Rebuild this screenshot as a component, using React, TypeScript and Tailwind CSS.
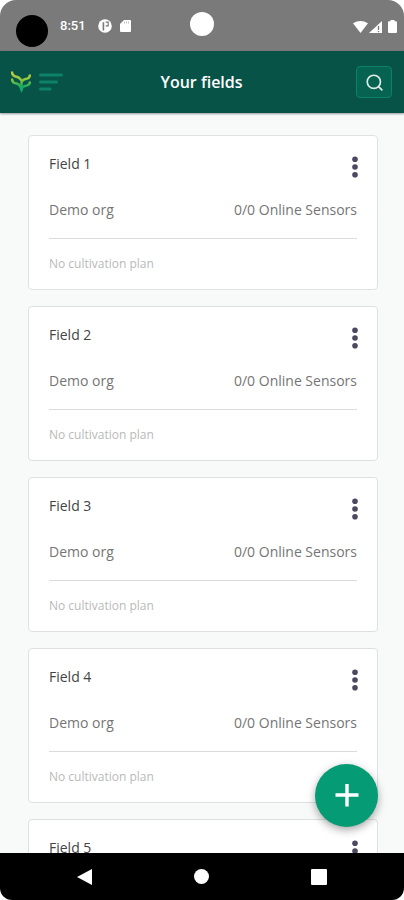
import { useState } from 'react';

interface Field {
  id: number;
  name: string;
  org: string;
  online: number;
  sensors: number;
  plan?: string;
}

const fields: Field[] = [1, 2, 3, 4, 5].map((id) => ({
  id,
  name: `Field ${id}`,
  org: 'Demo org',
  online: 0,
  sensors: 0,
}));

const StatusBar = () => (
  <div className="grid h-[51px] shrink-0 grid-cols-[1fr_auto_1fr] items-start bg-[#7a7a7a]">
    <div className="flex items-start pl-4">
      <span className="mt-[15px] size-8 rounded-full bg-black" />
      <span className="mt-4 ml-3 font-['Roboto'] text-[13px] leading-5 font-medium text-white">8:51</span>
      <svg className="mt-[19px] ml-3 size-[14px]" viewBox="0 0 14 14">
        <circle cx="7" cy="7" r="6.8" fill="#fff" />
        <path d="M5.400 11.500V3.200" fill="none" stroke="#7a7a7a" strokeWidth="1.600" />
        <path d="M7.600 3.200h2.600v3.600H7.600" fill="none" stroke="#7a7a7a" strokeWidth="1.200" />
      </svg>
      <svg className="mt-5 ml-2 h-3 w-[11px]" viewBox="0 0 11 12">
        <path d="M4 0h6q1 0 1 1v10q0 1-1 1H1q-1 0-1-1V4z" fill="#fff" />
        <path d="M4.500 1.500v2M6.500 1.500v2M8.500 1.500v2" stroke="#b5b5b5" strokeWidth="0.800" />
      </svg>
    </div>
    <span className="mt-3 size-6 rounded-full bg-white" />
    <div className="mt-5 flex items-center justify-end pr-[7px]">
      <svg className="h-3 w-[15px]" viewBox="0 0 15 12" fill="#fff">
        <path d="M0 2.200Q7.500-2 15 2.200L7.500 12z" />
      </svg>
      <svg className="ml-px h-3 w-[13px]" viewBox="0 0 13 12">
        <path d="M13 0v12H0z" fill="#fff" />
        <path d="M9.500 5v4M9.500 10v1.300" stroke="#7a7a7a" strokeWidth="1.400" />
      </svg>
      <svg className="ml-[6px] h-[13px] w-[9px]" viewBox="0 0 9 13" fill="#fff">
        <path d="M2.500 0h4v1.200H8q1 0 1 1V12q0 1-1 1H1q-1 0-1-1V2.200q0-1 1-1h1.500z" />
      </svg>
    </div>
  </div>
);

const Logo = () => (
  <svg className="h-[22px] w-5" viewBox="0 0 20 22" fill="none">
    <defs>
      <linearGradient id="leaf" x1="0" y1="0" x2="0" y2="22" gradientUnits="userSpaceOnUse">
        <stop offset="0" stopColor="#d3cf3c" />
        <stop offset="0.4" stopColor="#8cc63f" />
        <stop offset="0.65" stopColor="#2bb05a" />
        <stop offset="1" stopColor="#0ba36f" />
      </linearGradient>
    </defs>
    <g stroke="url(#leaf)" strokeWidth="2.400">
      <path d="M1 .5Q1 4.500 4.500 5.500 8.500 6 10.500 10" />
      <path d="M19 3.500Q19 7 15.500 7.800 11 8.500 10.500 12v5" />
      <path d="M1 7.500Q1 11.500 4.500 12.300 9 13 10.200 18" />
      <path d="M19 10.500Q19 14 15.500 14.600 11 15.200 10.200 19" />
    </g>
    <path d="M8.700 15h3.600l-.7 4.500-1.600 2.500z" fill="#0fae66" />
  </svg>
);

const Header = () => (
  <header className="z-10 grid h-[62px] shrink-0 grid-cols-[1fr_auto_1fr] items-center bg-[#085348] pr-3 pl-[11px] shadow-[0_1px_2px_rgba(0,0,0,0.4)]">
    <button type="button" aria-label="Open menu" className="flex items-center gap-2 justify-self-start">
      <Logo />
      <svg className="h-[18px] w-6" viewBox="0 0 24 18" stroke="#0d8268" strokeWidth="3" strokeLinecap="round">
        <path d="M1.500 2h21M1.500 9h16M1.500 16h9.500" />
      </svg>
    </button>
    <h1 className="text-base leading-6 font-semibold text-white">Your fields</h1>
    <button
      type="button"
      aria-label="Search fields"
      className="flex h-8 w-9 items-center justify-center justify-self-end rounded border border-[#0b8167] bg-[#066351]"
    >
      <svg className="size-[17px]" viewBox="0 0 18 18" fill="none" stroke="#dfe9e6" strokeWidth="1.800" strokeLinecap="round">
        <circle cx="8.300" cy="8.300" r="7" />
        <path d="M13.300 13.300l3.500 3.500" />
      </svg>
    </button>
  </header>
);

const FieldCard = ({ field }: { field: Field }) => (
  <article className="rounded border border-[#dde2e1] bg-white px-5 pt-4 pb-[15px]">
    <div className="flex items-start justify-between">
      <h2 className="text-sm leading-6 text-[#444444]">{field.name}</h2>
      <button type="button" aria-label={`Options for ${field.name}`} className="-mr-px pt-1">
        <svg className="h-[22px] w-[6px]" viewBox="0 0 6 22" fill="#4b4960">
          <circle cx="3" cy="3.200" r="2.800" />
          <circle cx="3" cy="11" r="2.800" />
          <circle cx="3" cy="18.800" r="2.800" />
        </svg>
      </button>
    </div>
    <div className="mt-[22px] flex justify-between border-b border-[#d9dcdc] pb-[18px] text-sm leading-5 text-[#757575]">
      <span>{field.org}</span>
      <span>
        {field.online}/{field.sensors} Online Sensors
      </span>
    </div>
    <p className="mt-[15px] text-xs leading-5 text-[#b9b9b9]">{field.plan ?? 'No cultivation plan'}</p>
  </article>
);

const NavigationBar = () => (
  <nav className="grid h-[47px] shrink-0 grid-cols-3 items-center bg-black px-[26px]">
    <button type="button" aria-label="Back" className="justify-self-center">
      <svg className="h-4 w-[15px]" viewBox="0 0 15 16" fill="#fff">
        <path d="M15 0v16L0 8z" />
      </svg>
    </button>
    <button type="button" aria-label="Home" className="size-[15px] justify-self-center rounded-full bg-white" />
    <button type="button" aria-label="Recent apps" className="size-4 justify-self-center rounded-[1px] bg-white" />
  </nav>
);

const App = () => {
  const [list] = useState<Field[]>(fields);

  return (
    <div className="h-screen bg-white">
      <div className="flex h-full flex-col overflow-hidden rounded-t-2xl rounded-b-xl font-['Open_Sans',sans-serif]">
        <StatusBar />
        <Header />
        <div className="relative min-h-0 flex-1 bg-[#f8faf9]">
          <main className="flex h-full flex-col gap-4 overflow-hidden pt-[22px] pr-[26px] pl-7">
            {list.map((field) => (
              <FieldCard key={field.id} field={field} />
            ))}
          </main>
          <button
            type="button"
            aria-label="Add field"
            className="absolute right-[26px] bottom-[26px] flex size-[63px] items-center justify-center rounded-full bg-[#059b75] shadow-[0_3px_8px_rgba(0,0,0,0.35)]"
          >
            <svg className="size-6" viewBox="0 0 24 24" stroke="#fff" strokeWidth="3.400">
              <path d="M12 0v22.500M.5 11h23" />
            </svg>
          </button>
        </div>
        <NavigationBar />
      </div>
    </div>
  );
};

export default App;
